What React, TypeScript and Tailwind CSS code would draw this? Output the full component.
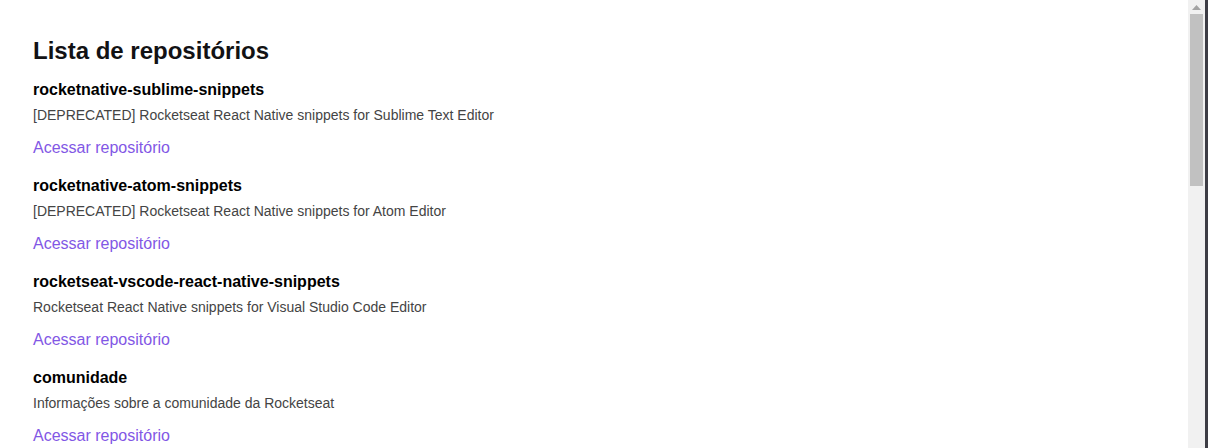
import React from 'react';

// Repositórios listados
const repositories = [
  {
    id: 1,
    name: 'rocketnative-sublime-snippets',
    description: '[DEPRECATED] Rocketseat React Native snippets for Sublime Text Editor',
  },
  {
    id: 2,
    name: 'rocketnative-atom-snippets',
    description: '[DEPRECATED] Rocketseat React Native snippets for Atom Editor',
  },
  {
    id: 3,
    name: 'rocketseat-vscode-react-native-snippets',
    description: 'Rocketseat React Native snippets for Visual Studio Code Editor',
  },
  {
    id: 4,
    name: 'comunidade',
    description: 'Informações sobre a comunidade da Rocketseat',
  },
];

const App: React.FC = () => {
  return (
    <div className="flex h-[448px] w-full overflow-hidden bg-white font-['Liberation_Sans',Arial,sans-serif]">
      {/* Conteúdo */}
      <main className="flex-1 pl-[33px] pr-8 pt-[35px]">
        <h1 className="text-[24px] leading-[32px] font-bold text-[#121214]">
          Lista de repositórios
        </h1>

        <ul className="mt-[11px] flex flex-col gap-[14px]">
          {repositories.map((repo) => (
            <li key={repo.id} className="flex flex-col">
              <strong className="text-[16px] leading-[24px] font-bold text-[#000]">
                {repo.name}
              </strong>
              <p className="mt-[3px] text-[14px] leading-[20px] text-[#444]">
                {repo.description}
              </p>
              <a
                href="#"
                className="mt-[11px] self-start text-[16px] leading-[24px] text-[#8257e5]"
              >
                Acessar repositório
              </a>
            </li>
          ))}
        </ul>
      </main>

      {/* Barra de rolagem */}
      <aside className="flex w-[17px] flex-col items-center bg-[#f1f1f1]">
        <div className="flex h-[14px] w-full items-center justify-center">
          <svg width="9" height="5" viewBox="0 0 9 5">
            <path d="M4.5 0 L9 5 L0 5 Z" fill="#a3a3a3" />
          </svg>
        </div>
        <div className="h-[172px] w-[13px] bg-[#c1c1c1]" />
      </aside>
      <div className="w-[3px] bg-[#3d3d45]" />
    </div>
  );
};

export default App;
